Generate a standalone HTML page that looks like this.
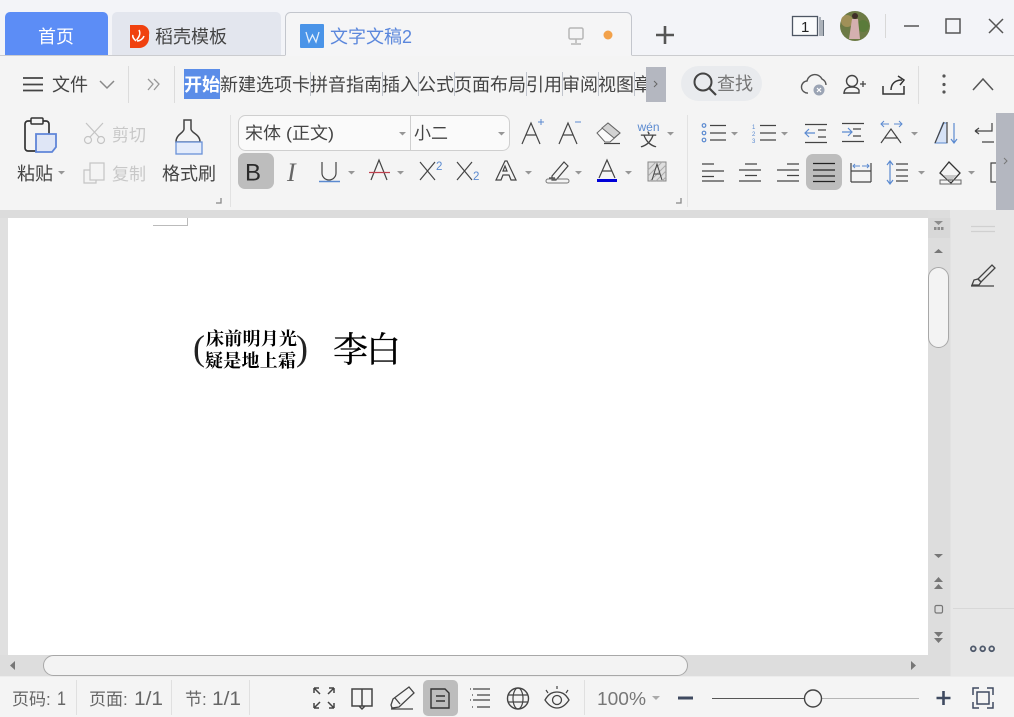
<!DOCTYPE html>
<html lang="zh"><head><meta charset="utf-8"><title>文字文稿2</title>
<style>
html,body{margin:0;padding:0;width:1014px;height:717px;overflow:hidden;background:#f4f4f4}
svg{display:block;position:absolute;left:0;top:0}
text{font-family:"Liberation Sans","Noto Sans CJK SC",sans-serif;fill:#444}
.s{fill:none;stroke:#444;stroke-width:1.2}
.b{fill:none;stroke:#5b8ad0;stroke-width:1.2}
.t{fill:#969696}
.d{fill:none;stroke:#c4c4c4;stroke-width:1.2}
.serif{font-family:"Liberation Serif","Noto Serif CJK SC",serif;fill:#000}
.st{fill:#666}
</style></head><body>
<svg width="1014" height="717" viewBox="0 0 1014 717" xmlns="http://www.w3.org/2000/svg">
<defs><clipPath id="c1"><rect x="634" y="66" width="12" height="36"/></clipPath></defs>
<!-- backgrounds -->
<rect width="1014" height="55" fill="#f3f4f8"/>
<rect y="56" width="1014" height="161" fill="#f4f4f4"/>
<rect y="55" width="1014" height="1" fill="#cbcccf"/>
<!-- tabs -->
<path d="M5 55V17a5 5 0 0 1 5-5h93a5 5 0 0 1 5 5v38z" fill="#5c8df6"/>
<text x="38" y="43" font-size="18" style="fill:#fff">首页</text>
<path d="M112 55V17a5 5 0 0 1 5-5h159a5 5 0 0 1 5 5v38z" fill="#e3e6ee"/>
<path d="M130 25h11a8 8 0 0 1 8 10v3a10 10 0 0 1-10 10h-9z" fill="#f0410f"/>
<path d="M139 30c2 4 0 7-2.500 10M144 36c-1 3-4 5-7 5M133 35c-1 2 1 4 3 6" fill="none" stroke="#fff" stroke-width="1.500"/>
<text x="155" y="43" font-size="18">稻壳模板</text>
<path d="M285.500 56V17a5 5 0 0 1 5-5h336a5 5 0 0 1 5 5v39z" fill="#f5f5f6"/>
<path d="M285.500 55V17.500a5 5 0 0 1 5-5h336a5 5 0 0 1 5 5V55" fill="none" stroke="#c3c6cd"/>
<rect x="300" y="24" width="24" height="24" rx="1" fill="#4a94e8"/>
<path d="M306 32l3 10 3.500-7 3.500 7 3-10" fill="none" stroke="#e4effb" stroke-width="1.300"/>
<text x="330" y="43" font-size="18" style="fill:#5b87dc">文字文稿2</text>
<rect x="569" y="28" width="14" height="11" rx="1.500" fill="none" stroke="#b6b6b6" stroke-width="1.500"/>
<path d="M576 39v4M571 44h10" stroke="#b6b6b6" stroke-width="1.500"/>
<circle cx="608" cy="35" r="4.500" fill="#f2a14a"/>
<path d="M665 26v18M656 35h18" stroke="#555" stroke-width="2.600"/>
<!-- top right -->
<rect x="792.500" y="16.500" width="25" height="19" fill="#fafbfc" stroke="#4d5663" stroke-width="1.300"/>
<text x="801" y="32" font-size="15" style="fill:#222">1</text>
<path d="M820 17v19M822 20v16M823.500 20v16" stroke="#66707c" stroke-width="1" fill="none"/>
<circle cx="855" cy="26" r="15" fill="#6c7a45"/>
<circle cx="847" cy="21" r="6" fill="#a09058"/><circle cx="863" cy="26" r="6" fill="#5a7b3a"/>
<path d="M852 19h6l2 20h-11z" fill="#d4b0b0"/><circle cx="855" cy="16" r="3" fill="#3f2e28"/>
<rect x="885" y="14" width="1" height="24" fill="#d8d8d8"/>
<path d="M904 26h15" stroke="#555" stroke-width="1.500"/>
<rect x="946" y="19" width="14" height="14" fill="none" stroke="#555" stroke-width="1.500"/>
<path d="M989 19l14 14M1003 19l-14 14" stroke="#555" stroke-width="1.500"/>
<!-- menu row -->
<path d="M23 78h20M23 84.500h20M23 90.500h20" stroke="#444" stroke-width="1.800"/>
<text x="52" y="91" font-size="18">文件</text>
<path d="M100 81l7 7 7-7" class="s" style="stroke:#888;stroke-width:1.500"/>
<rect x="128" y="66" width="1" height="37" fill="#dcdcdc"/>
<path d="M148 79l5 5-5 6M154 79l5 5-5 6" fill="none" stroke="#999" stroke-width="1.300"/>
<rect x="174" y="66" width="1" height="37" fill="#dcdcdc"/>
<rect x="184" y="69" width="36" height="30" fill="#5b8de8"/>
<text x="184" y="91" font-size="18" font-weight="700" style="fill:#fff">开始</text>
<text x="220" y="91" font-size="18">新建选项卡</text>
<text x="310" y="91" font-size="18">拼音指南</text>
<text x="382" y="91" font-size="18">插入</text>
<text x="418" y="91" font-size="18">公式</text>
<text x="454" y="91" font-size="18">页面布局</text>
<text x="526" y="91" font-size="18">引用</text>
<text x="562" y="91" font-size="18">审阅</text>
<text x="598" y="91" font-size="18">视图</text>
<text x="634" y="91" font-size="18" clip-path="url(#c1)">章节</text>
<path d="M310.500 72v24M382.500 72v24M418.500 72v24M454.500 72v24M526.500 72v24M562.500 72v24M598.500 72v24M634.500 72v24" stroke="#c0c4cc" stroke-width="1"/>
<rect x="646" y="67" width="20" height="35" fill="#b4b7c0"/>
<path d="M654 81l3 3-3 3" fill="none" stroke="#666" stroke-width="1"/>
<rect x="681" y="66" width="81" height="35" rx="17.500" fill="#e9ebee"/>
<circle cx="703" cy="82" r="8.500" fill="none" stroke="#444" stroke-width="2"/>
<path d="M709 88l7 7" stroke="#444" stroke-width="2.200"/>
<text x="717" y="90" font-size="18" style="fill:#777">查找</text>
<path d="M808 93a6 6 0 0 1-1-12a8 8 0 0 1 15-2a7 7 0 0 1 4 6" class="s" style="stroke:#555;stroke-width:1.400"/>
<circle cx="819" cy="90" r="5.500" fill="#9ba4b4"/>
<path d="M817 88l4 4M821 88l-4 4" stroke="#fff" stroke-width="1.200"/>
<circle cx="852" cy="81" r="5.500" class="s" style="stroke-width:1.400"/>
<path d="M844 94c0-6 4-7 8-7s6 1 7 3v3h-15z" class="s" style="stroke-width:1.400"/>
<path d="M860 84h6M863 81v6" stroke="#444" stroke-width="1.300"/>
<path d="M883 86v8h21v-8M891 90c0-6 4-10 11-10M898 76l6 4-4 5" class="s" style="stroke:#333;stroke-width:1.500"/>
<rect x="918" y="66" width="1" height="38" fill="#dedede"/>
<circle cx="944" cy="76" r="1.600" fill="#555"/><circle cx="944" cy="84.500" r="1.600" fill="#555"/><circle cx="944" cy="92" r="1.600" fill="#555"/>
<path d="M973 90l10-11 10 11" class="s" style="stroke:#555;stroke-width:1.500"/>
<!-- clipboard group -->
<rect x="25" y="121" width="24" height="30" rx="3" class="s" style="stroke:#333;stroke-width:1.700"/>
<rect x="31" y="118" width="12" height="6" rx="1" fill="#f4f4f4" stroke="#333" stroke-width="1.500"/>
<path d="M36 134h20v13l-4 5h-16z" fill="#dfe6f6" stroke="#5f85d8" stroke-width="1.800"/>
<text x="17" y="180" font-size="18">粘贴</text>
<path d="M58 171h7l-3.500 3.500z" class="t"/>
<circle cx="88" cy="140" r="3.500" class="d"/><circle cx="101" cy="140" r="3.500" class="d"/>
<path d="M90 137l13-14M99 137l-13-14" class="d"/>
<text x="112" y="141" font-size="17" style="fill:#c8c8c8">剪切</text>
<rect x="90" y="163" width="14" height="17" class="d"/>
<path d="M90 170h-6v13h12v-3" class="d"/>
<text x="112" y="180" font-size="17" style="fill:#c8c8c8">复制</text>
<path d="M184 120h7v9c0 4 9 5 9 13H176c0-8 8-9 8-13z" class="s" style="stroke-width:1.500"/>
<rect x="176" y="142" width="26" height="12" fill="#e4ecfb" stroke="#6a92d8" stroke-width="1.300"/>
<text x="162" y="180" font-size="18">格式刷</text>
<path d="M216 203h5v-5" fill="none" stroke="#888" stroke-width="1.300"/>
<rect x="230" y="115" width="1" height="92" fill="#e2e2e2"/>
<!-- font group -->
<rect x="238.500" y="115.500" width="271" height="35" rx="7" fill="#fafafa" stroke="#cfcfcf"/>
<rect x="410" y="116" width="1" height="34" fill="#cfcfcf"/>
<text x="245" y="139" font-size="17" textLength="89" lengthAdjust="spacingAndGlyphs">宋体 (正文)</text>
<text x="414" y="139" font-size="17">小二</text>
<path d="M399 132h7l-3.500 3.500z" class="t"/><path d="M498 132h7l-3.500 3.500z" class="t"/>
<rect x="238" y="153" width="36" height="36" rx="7" fill="#bdbdbd"/>
<text x="245" y="180.500" font-size="24" style="fill:#2a2a2a">B</text>
<text x="287" y="181" font-size="26" font-style="italic" style="font-family:'Liberation Serif',serif;fill:#666">I</text>
<path d="M322 162v11a7 7 0 0 0 14 0v-11" class="s"/>
<path d="M319 181.500h21" stroke="#5b8ad0" stroke-width="1.400"/>
<path d="M348 171h7l-3.500 3.500z" class="t"/>
<path d="M371 180l8-20 8 20" class="s"/><path d="M369 172.500h21" stroke="#c0424f" stroke-width="1.300"/>
<path d="M397 171h7l-3.500 3.500z" class="t"/>
<path d="M420 162l15 18M435 162l-15 18" class="s"/>
<text x="436" y="170" font-size="11.500" style="fill:#5b8ad0">2</text>
<path d="M457 162l15 18M472 162l-15 18" class="s"/>
<text x="473" y="180" font-size="11.500" style="fill:#5b8ad0">2</text>
<path d="M496 180l9-19h2l9 19h-5l-2-5h-6l-2 5zM503 171h4l-2-5z" class="s"/>
<path d="M525 171h7l-3.500 3.500z" class="t"/>
<path d="M552 176l12-14 4 4-12 14h-4zM549 178h6" class="s"/>
<rect x="546" y="179" width="23" height="4" rx="2" fill="none" stroke="#777"/>
<path d="M575 171h7l-3.500 3.500z" class="t"/>
<path d="M599 178l8-18 8 18M602 171h10" class="s"/>
<rect x="597" y="179" width="20" height="3" fill="#0000d8"/>
<path d="M625 171h7l-3.500 3.500z" class="t"/>
<rect x="648" y="162" width="18" height="19" fill="#dedede" stroke="#888"/>
<path d="M648 170l8-8M648 176l14-14M650 181l16-16M656 181l10-10M662 181l4-4" stroke="#aaa" stroke-width="1"/>
<path d="M652 180l5-16 5 16M654 174h6" class="s" style="stroke-width:1"/>
<path d="M522 144l9-21 9 21M526 135h10" class="s"/>
<path d="M538 122h6M541 119v6" stroke="#5b8ad0" stroke-width="1"/>
<path d="M559 144l9-21 9 21M563 135h10" class="s"/>
<path d="M575 122h6" stroke="#5b8ad0" stroke-width="1"/>
<path d="M597 133l11-10 12 10-10 9h-5z" fill="#fafafa" stroke="#666"/>
<path d="M608 123l12 10-6 5-12-10z" fill="#d2d2d2" stroke="#666"/>
<path d="M604 143.500h16" class="s"/>
<text x="637.500" y="131" font-size="12" style="fill:#5b8ad0">wén</text>
<text x="640" y="146" font-size="17" textLength="18">文</text>
<path d="M667 132h7l-3.500 3.500z" class="t"/>
<path d="M676 203h5v-5" fill="none" stroke="#888" stroke-width="1.300"/>
<rect x="687" y="115" width="1" height="92" fill="#e2e2e2"/>
<!-- paragraph row 1 -->
<circle cx="704" cy="125.500" r="1.800" class="b"/><circle cx="704" cy="133" r="1.800" class="b"/><circle cx="704" cy="140" r="1.800" class="b"/>
<path d="M710 125.500h16M710 133h16M710 140h16" class="s"/>
<path d="M731 132h7l-3.500 3.500z" class="t"/>
<text x="752" y="129" font-size="6" style="fill:#5b8ad0">1</text><text x="752" y="136" font-size="6" style="fill:#5b8ad0">2</text><text x="752" y="143" font-size="6" style="fill:#5b8ad0">3</text>
<path d="M760 125.500h16M760 133h16M760 140h16" class="s"/>
<path d="M781 132h7l-3.500 3.500z" class="t"/>
<path d="M805 124.500h22M805 142.500h22M818 130h8M818 137h8" class="s"/>
<path d="M815 133h-10M809 129l-4 4 4 4" class="b"/>
<path d="M842 123.500h22M842 141.500h22M853 129h8M853 136h8" class="s"/>
<path d="M842 132h10M848 128l4 4-4 4" class="b"/>
<path d="M881 143l10-14 10 14M885 138h13" class="s"/>
<path d="M881 124h8M884 121l-3 3 3 3M902 124h-8M899 121l3 3-3 3" class="b" style="stroke-width:1"/>
<path d="M911 132h7l-3.500 3.500z" class="t"/>
<path d="M935 143l8-20h4v20h-12z" fill="#d6e2f6" stroke="#5b8ad0"/>
<path d="M935 143l9-21M947 122v21" class="s"/>
<path d="M954 123v20M951 139l3 4 3-4" class="b"/>
<path d="M975 131h17v-8M975 131l4-3M975 131l4 3M982 142h12" class="s"/>
<!-- paragraph row 2 -->
<path d="M702 164h12M702 171h22M702 176.500h12M702 181h22" class="s"/>
<path d="M745 164h12M739 170h22M745 175.500h12M739 181h22" class="s"/>
<path d="M787 164h12M777 170h22M787 175.500h12M777 181h22" class="s"/>
<rect x="806" y="154" width="36" height="36" rx="7" fill="#bdbdbd"/>
<path d="M813 163.500h22M813 170h22M813 176h22M813 181.500h22" class="s" style="stroke:#222"/>
<path d="M851 163v19M871 163v19M851 171h20M851 182h20" class="s"/>
<path d="M853 166h7M855 164l-2 2 2 2M869 166h-7M867 164l2 2-2 2" class="b" style="stroke-width:1"/>
<path d="M896 164h12M896 170h12M896 176h12M896 181h12" class="s"/>
<path d="M890 161v23M887 165l3-4 3 4M887 180l3 4 3-4" class="b"/>
<path d="M918 171h7l-3.500 3.500z" class="t"/>
<path d="M940 173l9-11 11 11-9 10z" fill="none" stroke="#333" stroke-width="1.300"/>
<path d="M943 175h14l-7 7z" fill="#c8c8c8"/>
<rect x="940" y="180" width="21" height="4" fill="none" stroke="#666"/>
<path d="M968 171h7l-3.500 3.500z" class="t"/>
<path d="M996 163h-5v19h5" class="s"/>
<rect x="996" y="113" width="18" height="98" fill="#b4b7c0"/>
<path d="M1004 158l3 3-3 3" fill="none" stroke="#777" stroke-width="1"/>
<!-- work area -->
<rect y="210" width="1014" height="8" fill="#dcdcdc"/>
<rect y="218" width="8" height="437" fill="#e0e0e0"/>
<rect x="8" y="218" width="920" height="437" fill="#fff"/>
<path d="M153 225.500h34.500V218" fill="none" stroke="#bbb"/>
<text x="193" y="360" font-size="36" style="font-family:'Liberation Serif',serif;fill:#222">(</text>
<text x="296" y="360" font-size="36" style="font-family:'Liberation Serif',serif;fill:#222">)</text>
<text class="serif" x="206" y="345" font-size="18" font-weight="700" textLength="91">床前明月光</text>
<text class="serif" x="205" y="367" font-size="18" font-weight="700" textLength="91">疑是地上霜</text>
<text class="serif" x="333" y="362" font-size="35" textLength="68" style="stroke:#000;stroke-width:.3">李白</text>
<!-- v scrollbar -->
<rect x="928" y="210" width="22" height="466" fill="#dddddd"/>
<rect x="928" y="218" width="22" height="20" fill="#d8d8d8"/>
<path d="M934 221h9l-4.500 4z" fill="#8c8c8c"/>
<path d="M934 227h2.500v3h-2.500zM937.500 227h2.500v3h-2.500zM941 227h2.500v3h-2.500z" fill="#8c8c8c"/>
<path d="M934 253h9l-4.500-4z" fill="#777"/>
<rect x="928.500" y="267.500" width="20" height="80" rx="10" fill="#f3f3f3" stroke="#a8a8a8"/>
<path d="M934 554h9l-4.500 4z" fill="#777"/>
<path d="M934 582h9l-4.500-5zM934 589h9l-4.500-5z" fill="#777"/>
<rect x="935" y="605.500" width="7.500" height="7.500" rx="1.500" fill="none" stroke="#777" stroke-width="1.200"/>
<path d="M934 632h9l-4.500 5zM934 638h9l-4.500 5z" fill="#777"/>
<!-- right panel -->
<rect x="950" y="210" width="64" height="466" fill="#e7e7e7"/>
<rect x="950" y="218" width="1" height="458" fill="#e2e2e2"/>
<path d="M971 226.500h24M971 231.500h24" stroke="#d0d0d0" stroke-width="1.200"/>
<path d="M978 279l14-14 3 3-14 14zM971 286h23" class="s" style="stroke-width:1.300"/>
<path d="M972 285l2-5 4-1 3 3-2 3z" fill="none" stroke="#444" stroke-width="1.300"/>
<rect x="953" y="608" width="61" height="1" fill="#d8d8d8"/>
<circle cx="973.300" cy="648.800" r="2.400" fill="none" stroke="#505a6c" stroke-width="1.800"/>
<circle cx="982.700" cy="648.800" r="2.400" fill="none" stroke="#505a6c" stroke-width="1.800"/>
<circle cx="991.700" cy="648.800" r="2.400" fill="none" stroke="#505a6c" stroke-width="1.800"/>
<!-- h scrollbar -->
<rect y="655" width="950" height="21" fill="#dddddd"/>
<path d="M15 661v9l-5-4.500z" fill="#777"/>
<path d="M911 661v9l5-4.500z" fill="#777"/>
<rect x="43.500" y="655.500" width="644" height="20" rx="10" fill="#f3f3f3" stroke="#a8a8a8"/>
<!-- status bar -->
<rect y="676" width="1014" height="41" fill="#f4f4f4"/>
<rect y="676" width="1014" height="1" fill="#ececec"/>
<text class="st" x="12" y="705" font-size="17">页码:</text>
<text class="st" x="57" y="705" font-size="19" textLength="9" lengthAdjust="spacingAndGlyphs">1</text>
<rect x="76" y="680" width="1" height="35" fill="#e0e0e0"/>
<text class="st" x="89" y="705" font-size="17">页面:</text>
<text class="st" x="134" y="705" font-size="19" textLength="29" lengthAdjust="spacingAndGlyphs">1/1</text>
<rect x="171" y="680" width="1" height="35" fill="#e0e0e0"/>
<text class="st" x="185" y="705" font-size="17">节:</text>
<text class="st" x="212" y="705" font-size="19" textLength="29" lengthAdjust="spacingAndGlyphs">1/1</text>
<rect x="249" y="680" width="1" height="35" fill="#e0e0e0"/>
<path d="M314 688h5M314 688v5M314 688l6 6M334 688h-5M334 688v5M334 688l-6 6M314 708h5M314 708v-5M314 708l6-6M334 708h-5M334 708v-5M334 708l-6-6" fill="none" stroke="#444" stroke-width="1.500"/>
<path d="M352 689h10v17h-10zM362 689h10v17h-10zM359 706l3 3 3-3" class="s" style="stroke-width:1.500"/>
<path d="M391 705l2-6 16-12 5 6-15 14-7 1zM391 709h22M395 698l5 6" class="s" style="stroke-width:1.300"/>
<rect x="423" y="680" width="35" height="36" rx="5" fill="#bdbdbd"/>
<path d="M431 689h14l4 4v15h-18zM436 696h9M436 701h9" class="s" style="stroke:#333;stroke-width:1.400"/>
<path d="M473 689h17M477 695h13M473 700h17M477 707h13M470 689h1M472 695h1M470 700h1M472 707h1" class="s"/>
<circle cx="518" cy="698.500" r="10.500" class="s" style="stroke-width:1.400"/>
<ellipse cx="518" cy="698.500" rx="5" ry="10.500" class="s"/>
<path d="M508 695h20M508 702h20" class="s"/>
<path d="M545 700c4-7 8-8 12-8s8 1 12 8c-4 6-8 8-12 8s-8-2-12-8z" class="s" style="stroke-width:1.300"/>
<circle cx="557" cy="700" r="4.500" class="s" style="stroke-width:1.300"/>
<path d="M557 686v3M546 690l2 3M568 690l-2 3" class="s"/>
<rect x="584" y="680" width="1" height="35" fill="#e0e0e0"/>
<text x="597" y="705" font-size="18" textLength="49" lengthAdjust="spacingAndGlyphs" style="fill:#777">100%</text>
<path d="M652 696h8l-4 4z" fill="#aaa"/>
<rect x="678" y="696.500" width="15" height="3" fill="#3f4a60"/>
<path d="M712 698.500h95" stroke="#555" stroke-width="1"/>
<path d="M818 698.500h101" stroke="#b5b5b5" stroke-width="1"/>
<circle cx="813" cy="698.500" r="8.500" fill="#f4f4f4" stroke="#444" stroke-width="1.400"/>
<path d="M936.500 698h14M943.500 691v14" stroke="#3f4a60" stroke-width="2.600"/>
<path d="M973 695v-7h6M993 695v-7h-6M973 702v6h6M993 702v6h-6" fill="none" stroke="#3f4a60" stroke-width="1.500"/>
<rect x="977" y="692" width="12" height="12" fill="none" stroke="#3f4a60" stroke-width="1.500"/>
</svg>
</body></html>
